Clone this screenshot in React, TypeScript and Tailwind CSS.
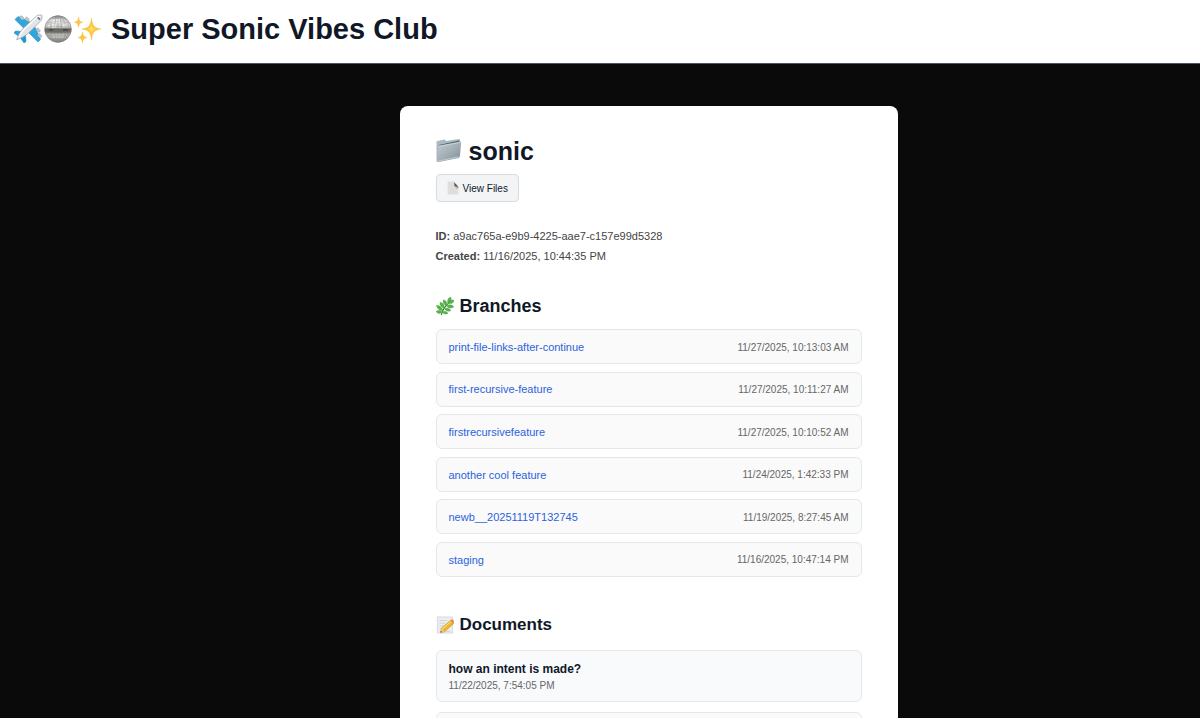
import React from 'react';

const branches = [
  { name: 'print-file-links-after-continue', date: '11/27/2025, 10:13:03 AM' },
  { name: 'first-recursive-feature', date: '11/27/2025, 10:11:27 AM' },
  { name: 'firstrecursivefeature', date: '11/27/2025, 10:10:52 AM' },
  { name: 'another cool feature', date: '11/24/2025, 1:42:33 PM' },
  { name: 'newb__20251119T132745', date: '11/19/2025, 8:27:45 AM' },
  { name: 'staging', date: '11/16/2025, 10:47:14 PM' },
];

const PlaneIcon = () => (
  <svg viewBox="0 0 30 30" className="h-[30px] w-[30px]" aria-hidden="true">
    <g stroke="#1780ad" strokeWidth="0.5" strokeLinejoin="round">
      <path d="M19 9 5 2.500 2 5.500l10 10z" fill="#2fa6dc" />
      <path d="m21 11 6.500 14.500L25 28l-10-10z" fill="#2fa6dc" />
      <path d="m9 17.500-6.500-.5L1 19l6 4z" fill="#27a2dc" />
      <path d="m12.500 21 .5 6.500L11 29l-4-6z" fill="#1d95cf" />
    </g>
    <g fill="#b9c8d2" stroke="#8496a3" strokeWidth="0.4">
      <rect x="7.500" y="1.500" width="3" height="4.500" rx="1.500" transform="rotate(-45 9 4)" />
      <rect x="12.500" y="3" width="3" height="4.500" rx="1.500" transform="rotate(-45 14 5)" />
      <rect x="23.500" y="14" width="3" height="4.500" rx="1.500" transform="rotate(-45 25 16)" />
      <rect x="25" y="19.500" width="3" height="4.500" rx="1.500" transform="rotate(-45 26.500 21.500)" />
    </g>
    <path d="M28.800 1.200c-2-.8-5 .2-7 2.300L10 14.500c-3 3.200-5 7.200-6.300 11.300 4.300-1.400 8-3.600 11.300-6.300L26.500 8.200c2.200-2.200 3.100-5 2.300-7z" fill="#e2e5e8" stroke="#939da5" strokeWidth="0.7" />
    <path d="M27.500 2.500c-2-.3-3.700.7-5 2L11 15.500c-2.200 2.400-4 5-5 7.800" fill="none" stroke="#fff" strokeWidth="1.200" />
    <path d="m24 3.700 2.600 2.500.7-1.400-2-1.900z" fill="#53636e" />
  </svg>
);

const DiscoBallIcon = () => (
  <svg viewBox="0 0 30 30" className="h-[30px] w-[30px]" aria-hidden="true">
    <defs>
      <linearGradient id="ball" x1="0" y1="0" x2="0" y2="1">
        <stop offset="0" stopColor="#9a9a9a" />
        <stop offset="0.22" stopColor="#dededd" />
        <stop offset="0.44" stopColor="#cacac8" />
        <stop offset="0.5" stopColor="#65625e" />
        <stop offset="0.62" stopColor="#77736f" />
        <stop offset="0.7" stopColor="#bdbbb9" />
        <stop offset="1" stopColor="#8a8a8a" />
      </linearGradient>
      <clipPath id="ballClip">
        <circle cx="15" cy="15" r="13.500" />
      </clipPath>
    </defs>
    <circle cx="15" cy="15" r="13.500" fill="url(#ball)" />
    <g clipPath="url(#ballClip)">
      <path d="M8 5h4v4H8zM13 5h4v4h-4zM9 10h4v4H9zM4 11h3v2H4zM20 10h3v3h-3z" fill="#fff" opacity="0.5" />
      <path d="M6 15h4v2H6zM20 15h5v2h-5z" fill="#34312f" opacity="0.5" />
      <path d="M9 21h12v3H9z" fill="#fff" opacity="0.25" />
      <g fill="none" stroke="#666" strokeWidth="0.4" opacity="0.6">
        <path d="M1 5.500q14-4 28 0M1 9q14-3 28 0M1 13q14-1 28 0M1 17q14 2 28 0M1 20.500q14 3 28 0M1 24q14 4 28 0" />
        <ellipse cx="15" cy="15" rx="11" ry="13.500" />
        <ellipse cx="15" cy="15" rx="7.500" ry="13.500" />
        <ellipse cx="15" cy="15" rx="3.500" ry="13.500" />
        <path d="M15 1v28" />
      </g>
    </g>
    <circle cx="15" cy="15" r="13.200" fill="none" stroke="#777" strokeWidth="0.5" />
  </svg>
);

const SparklesIcon = () => (
  <svg viewBox="0 0 30 30" className="h-[30px] w-[30px]" aria-hidden="true">
    <g fill="#fbc63b" stroke="#f2b52f" strokeWidth="0.4">
      <path d="M18.500 4c.8 7.200 2.200 9.800 9.500 11-7.300 1.200-8.700 3.800-9.500 11-.8-7.200-2.200-9.800-9.500-11 7.300-1.200 8.700-3.800 9.500-11z" />
      <path d="M5.500 3c.5 3.500 1.200 4.600 4.300 5.200-3.100.6-3.800 1.700-4.300 5.200C5 9.900 4.300 8.800 1.200 8.200 4.300 7.600 5 6.500 5.500 3z" />
      <path d="M9.500 18c.5 3.500 1.200 4.800 4.500 5.500-3.300.7-4 2-4.500 5.500-.5-3.500-1.200-4.800-4.500-5.500 3.300-.7 4-2 4.500-5.500z" />
    </g>
    <path d="M18.500 10c.4 3 1.500 4.400 4.500 5-3 .6-4.100 2-4.500 5-.4-3-1.500-4.400-4.500-5 3-.6 4.100-2 4.500-5z" fill="#ffda67" />
  </svg>
);

const FolderIcon = () => (
  <svg viewBox="0 0 26 26" className="h-[26px] w-[26px]" aria-hidden="true">
    <defs>
      <linearGradient id="folder" x1="0" y1="0" x2="1" y2="1">
        <stop offset="0" stopColor="#c5ccd0" />
        <stop offset="0.5" stopColor="#a4afb6" />
        <stop offset="1" stopColor="#7c8b95" />
      </linearGradient>
    </defs>
    <path d="M.5 4q0-1 1-1l7-1.500q1 0 1.500 1.500L23 1q1 0 1 1l-1 18L2 24q-1.500 0-1.500-1.500z" fill="#a9bac3" />
    <path d="m3 7 20.500-4.500L23 9 3 13z" fill="#465962" />
    <path d="M3.500 7.500 24 3.500q1.200-.2 1.100 1L24 18q-.2 1.300-1.300 1.500L2.500 24Q1 24.200 1.200 23L2.500 8.500q.1-.8 1-1z" fill="url(#folder)" />
    <path d="M2.800 8.500 24.500 4.300M2 23.200l20.500-4.500" fill="none" stroke="#dce2e5" strokeWidth="0.6" />
  </svg>
);

const PageIcon = () => (
  <svg viewBox="0 0 12 14" className="h-[14px] w-3" aria-hidden="true">
    <path d="M1 1h6l4 4v8H1z" fill="#e4e4e4" stroke="#d0d0d0" strokeWidth="0.5" />
    <path d="M2.500 3h3M2.500 5h3M2.500 7h6M2.500 9h7M2.500 11h7" stroke="#c4c4c4" strokeWidth="0.5" />
    <path d="M6.500 1q1.300 1.500.8 4.200Q9.500 5 11.500 7q-.5-2.500-5-6z" fill="#555" />
    <path d="M7.300 5.200Q9.500 5 11.500 6.500L9.800 8z" fill="#aaa" />
  </svg>
);

const HerbIcon = () => (
  <svg viewBox="0 0 20 20" className="h-5 w-[18px]" aria-hidden="true">
    <path d="M6 19.500c1-4 4-9.500 9-13.500" fill="none" stroke="#347b26" strokeWidth="1.200" strokeLinecap="round" />
    <g fill="#56b349" stroke="#3e9937" strokeWidth="0.4">
      <path d="M13.500 7.500c-1.500-3-.5-6 2.500-7.500 1.800 2.500.8 5.800-2.500 7.500z" />
      <path d="M14.500 7c1-3 3-4.300 5.500-3.500-.5 2.800-2.700 4.400-5.500 3.500z" />
      <path d="M11.500 9.500C8.500 8.500 7 5.700 8.500 3c3 1 4.300 3.500 3 6.500z" />
      <path d="M12 10c2.500-2 5.800-1.700 7.800 1-2.800 2-6 1.600-7.800-1z" />
      <path d="M9 12.500C5.700 11.500 4 9 4.500 5.800c3.300.8 5.300 3.400 4.500 6.700z" />
      <path d="M9.500 12.800c2.700-1.300 5.800-.3 7 2.500-3 1.200-6 .2-7-2.500z" />
      <path d="M7.500 15.500C4.500 15.500 1.300 13 .5 9.500c3.500-.2 6.800 2 7 6z" />
      <path d="M6.800 17C4.500 19 1.800 18.500 0 16c2.300-1.700 5.200-1.400 6.800 1z" />
      <path d="M7 16.500c2.300-1.500 5-.8 6.300 1.700-2.500 1.500-5.100.9-6.300-1.700z" />
    </g>
  </svg>
);

const MemoIcon = () => (
  <svg viewBox="0 0 20 20" className="h-5 w-[18px]" aria-hidden="true">
    <path d="M1.500 1h17v18h-17z" fill="#eceef0" stroke="#c9cccf" strokeWidth="0.7" />
    <path d="M4 5h8M4 8h6M4 11h5M4 14h4M4 17h12" stroke="#c2c8cc" strokeWidth="0.8" />
    <path d="m15.800 5 3.700 3.500L9.500 17.500l-4.500 1 1-5z" fill="#efb52e" stroke="#b77c23" strokeWidth="0.5" />
    <path d="m16.500 6.300-9.500 8.200" stroke="#ffdc69" strokeWidth="1.300" />
    <path d="m15.800 5 1-1q1-.7 2.200.5t1 2.500l-.5 1.500z" fill="#e08a72" />
    <path d="m6 13.500 3.500 4-4.500 1z" fill="#e7c69c" />
    <path d="m5.500 16.700 1.200 1.200-1.700.4z" fill="#333" />
  </svg>
);

const App = () => {
  return (
    <div className="flex h-screen flex-col overflow-hidden bg-[#0a0a0a] font-['Liberation_Sans',Arial,sans-serif] text-gray-900">
      <header className="flex h-16 shrink-0 items-center border-b border-gray-600 bg-white px-[13px] pb-[6px]">
        <div className="flex">
          <PlaneIcon />
          <DiscoBallIcon />
          <SparklesIcon />
        </div>
        <h1 className="ml-2 text-[29px] leading-8 font-bold">Super Sonic Vibes Club</h1>
      </header>

      <main className="flex justify-center pt-[42px] pl-[97px]">
        <div className="w-full max-w-[498px] rounded-lg bg-white px-9 pt-[29px] pb-9">
          <h2 className="flex h-8 items-center gap-[7px] text-[25px] leading-8 font-bold">
            <FolderIcon />
            sonic
          </h2>
          <button
            type="button"
            className="mt-[7px] flex h-7 items-center gap-1 rounded border border-[#d8dbdf] bg-gray-100 px-[10px] text-[10px] text-gray-900"
          >
            <PageIcon />
            View Files
          </button>

          <div className="mt-6 text-[11px] leading-5 text-[#444]">
            <p><strong>ID:</strong> a9ac765a-e9b9-4225-aae7-c157e99d5328</p>
            <p><strong>Created:</strong> 11/16/2025, 10:44:35 PM</p>
          </div>

          <section className="mt-7">
            <h3 className="flex items-center gap-[6px] text-lg leading-6 font-bold">
              <HerbIcon />
              Branches
            </h3>
            <ul className="mt-[11px] grid min-h-[248px] content-between">
              {branches.map((branch) => (
                <li
                  key={branch.name}
                  className="flex h-[35px] items-center justify-between rounded-md border border-gray-200 bg-[#fafafa] px-3 pt-px"
                >
                  <a href="#" className="text-[11px] text-[#2b62dc]">{branch.name}</a>
                  <span className="text-[10px] text-[#666]">{branch.date}</span>
                </li>
              ))}
            </ul>
          </section>

          <section className="mt-9">
            <h3 className="flex items-center gap-[6px] text-[17px] leading-6 font-bold">
              <MemoIcon />
              Documents
            </h3>
            <ul className="mt-[13px] flex flex-col gap-[10px]">
              <li className="h-[52px] rounded-md border border-gray-200 bg-slate-50 px-3 pt-[10px]">
                <h4 className="text-[12px] leading-4 font-bold">how an intent is made?</h4>
                <p className="mt-px text-[10px] leading-4 text-[#666]">11/22/2025, 7:54:05 PM</p>
              </li>
              <li className="h-[52px] rounded-md border border-gray-200 bg-slate-50" />
            </ul>
          </section>
        </div>
      </main>
    </div>
  );
};

export default App;
